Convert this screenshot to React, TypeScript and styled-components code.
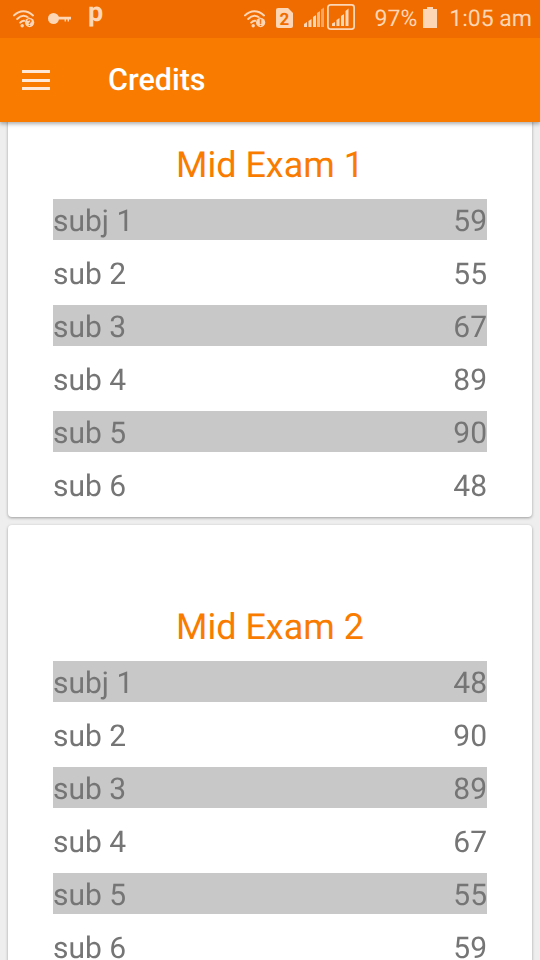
import React from 'react';
import styled, { createGlobalStyle } from 'styled-components';

const GlobalStyle = createGlobalStyle`
  html, body {
    margin: 0;
    padding: 0;
    background: #eeeeee;
  }
  body {
    font-family: Roboto, "Liberation Sans", sans-serif;
    text-rendering: geometricPrecision;
  }
`;

const Screen = styled.div`
  width: 540px;
  height: 960px;
  display: flex;
  flex-direction: column;
  overflow: hidden;
  background: #eeeeee;
`;

const StatusBar = styled.div`
  height: 38px;
  flex: none;
  display: flex;
  align-items: center;
  background: #f06c00;
  color: #fdd6b5;
  position: relative;
  z-index: 3;
`;

const StatusLeft = styled.div`
  display: flex;
  align-items: center;
  padding-left: 13px;
  flex: 1;
`;

const StatusRight = styled.div`
  display: flex;
  align-items: center;
  padding-right: 8px;
`;

const StatusText = styled.span<{ $gap: number }>`
  font-size: 23px;
  line-height: 38px;
  margin-left: ${p => p.$gap}px;
  color: #fdd6b5;
`;

const NotifyLetter = styled.span`
  font-size: 27px;
  font-weight: 700;
  line-height: 24px;
  margin: 0 0 14px 17px;
  color: #fdd6b5;
`;

const Glyph = styled.svg<{ $gap?: number; $lift?: number }>`
  display: block;
  flex: none;
  margin-left: ${p => p.$gap ?? 0}px;
  margin-bottom: ${p => p.$lift ?? 0}px;
`;

const Toolbar = styled.header`
  height: 84px;
  flex: none;
  display: flex;
  align-items: center;
  background: #f97c00;
  box-shadow: 0 2px 4px rgba(0, 0, 0, 0.32);
  position: relative;
  z-index: 2;
`;

const MenuButton = styled.div`
  width: 28px;
  height: 20px;
  margin-left: 22px;
  display: flex;
  flex-direction: column;
  justify-content: space-between;
`;

const MenuLine = styled.span`
  display: block;
  height: 3px;
  background: #ffe9d6;
`;

const Title = styled.h1`
  margin: 1px 0 0 58px;
  font-size: 30.5px;
  font-weight: 500;
  color: #ffffff;
`;

const Content = styled.main`
  flex: 1;
  overflow: hidden;
  padding: 0 8px;
  display: flex;
  flex-direction: column;
  gap: 8px;
`;

const Card = styled.section<{ $offset: number }>`
  flex: none;
  margin-top: ${p => p.$offset}px;
  padding: 81px 45px 12px;
  background: #ffffff;
  border-radius: 4px;
  box-shadow: 0 1px 3px rgba(0, 0, 0, 0.35);
`;

const ExamTitle = styled.h2`
  margin: 0 0 14px;
  padding-top: 1px;
  height: 40px;
  font-size: 36px;
  line-height: 41px;
  font-weight: 400;
  text-align: center;
  color: #f97c00;
`;

const Rows = styled.div`
  display: flex;
  flex-direction: column;
  gap: 12px;
  will-change: transform;
`;

const Row = styled.div<{ $shaded: boolean }>`
  height: 41px;
  padding-top: 4px;
  box-sizing: border-box;
  display: flex;
  justify-content: space-between;
  align-items: center;
  font-size: 30px;
  color: #757575;
  background: ${p => (p.$shaded ? '#c8c8c8' : 'transparent')};
`;

const exams = [
  {
    name: 'Mid Exam 1',
    offset: -59,
    marks: [['subj 1', 59], ['sub 2', 55], ['sub 3', 67], ['sub 4', 89], ['sub 5', 90], ['sub 6', 48]],
  },
  {
    name: 'Mid Exam 2',
    offset: 0,
    marks: [['subj 1', 48], ['sub 2', 90], ['sub 3', 89], ['sub 4', 67], ['sub 5', 55], ['sub 6', 59]],
  },
];

const Wifi = ({ badge }: { badge: string }) => (
  <Glyph width="22" height="18" viewBox="0 0 22 18" fill="none">
    <g stroke="#fdd6b5" strokeWidth="2" strokeLinecap="round">
      <path d="M1 5.4 C6.5 -0.2 14 -0.2 20 5.4" />
      <path d="M4.2 9 C8 5 12.5 5 16.3 8.6" />
      <path d="M7.2 12.6 C9 10.8 11 10.6 12 11" />
    </g>
    <circle cx="9.2" cy="15.8" r="1.7" fill="#fdd6b5" />
    <circle cx="16.6" cy="12.6" r="5" fill="#f06c00" />
    <circle cx="16.6" cy="12.6" r="4.6" fill="#fdd6b5" />
    <text x="16.6" y="15.9" fontSize="9.5" fontWeight="700" textAnchor="middle" fill="#f06c00" fontFamily="Roboto">{badge}</text>
  </Glyph>
);

const Key = () => (
  <Glyph $gap={13} $lift={2} width="23" height="11" viewBox="0 0 23 11" fill="#fdd6b5">
    <circle cx="5.5" cy="5.5" r="5.5" />
    <path d="M9 3.8 H23 V6.6 H21 V8.4 H19.6 V6.6 H18 V8.4 H16.6 V6.6 H9 Z" />
  </Glyph>
);

const Bars = () => (
  <Glyph $gap={11} $lift={4} width="20" height="20" viewBox="0 0 20 20" fill="#fdd6b5">
    <polygon points="0,20 0,17 3,15 3,20" />
    <polygon points="4.5,20 4.5,14 7.5,12 7.5,20" />
    <polygon points="9,20 9,10 12,8 12,20" />
    <polygon points="13,20 13,6 16,4 16,20" opacity="0.75" />
    <polygon points="17,20 17,2.5 20,0.5 20,20" opacity="0.55" />
  </Glyph>
);

const BoxedBars = () => (
  <Glyph $gap={3} $lift={4} width="28" height="26" viewBox="0 0 28 26" fill="#fdd6b5">
    <rect x="0.9" y="0.9" width="26.2" height="24.2" rx="2.5" fill="none" stroke="#fdd6b5" strokeWidth="1.8" />
    <polygon points="5,22 5,19.5 8,18 8,22" />
    <polygon points="9.5,22 9.5,16 12.5,14 12.5,22" />
    <polygon points="14,22 14,12 17,10 17,22" />
    <polygon points="18.5,22 18.5,7 21.5,4.5 21.5,22" />
  </Glyph>
);

const Sim = () => (
  <Glyph $gap={10} $lift={3} width="17" height="20" viewBox="0 0 17 20">
    <path d="M2 0 H12 L17 5 V18 a2 2 0 0 1 -2 2 H2 a2 2 0 0 1 -2 -2 V2 a2 2 0 0 1 2 -2 Z" fill="#fdd6b5" />
    <text x="8.5" y="16.5" fontSize="17" fontWeight="700" textAnchor="middle" fill="#f06c00" fontFamily="Roboto">2</text>
  </Glyph>
);

const Battery = () => (
  <Glyph $gap={6} $lift={3} width="14" height="21" viewBox="0 0 14 21" fill="#fdd6b5">
    <path d="M4 0 H10 V2 H14 V21 H0 V2 H4 Z" />
  </Glyph>
);

export default function App() {
  return (
    <Screen>
      <GlobalStyle />
      <StatusBar>
        <StatusLeft>
          <Wifi badge="?" />
          <Key />
          <NotifyLetter>p</NotifyLetter>
        </StatusLeft>
        <StatusRight>
          <Wifi badge="!" />
          <Sim />
          <Bars />
          <BoxedBars />
          <StatusText $gap={20}>97%</StatusText>
          <Battery />
          <StatusText $gap={12}>1:05 am</StatusText>
        </StatusRight>
      </StatusBar>
      <Toolbar>
        <MenuButton>
          <MenuLine />
          <MenuLine />
          <MenuLine />
        </MenuButton>
        <Title>Credits</Title>
      </Toolbar>
      <Content>
        {exams.map(exam => (
          <Card key={exam.name} $offset={exam.offset}>
            <ExamTitle>{exam.name}</ExamTitle>
            <Rows>
              {exam.marks.map(([label, mark], i) => (
                <Row key={i} $shaded={i % 2 === 0}>
                  <span>{label}</span>
                  <span>{mark}</span>
                </Row>
              ))}
            </Rows>
          </Card>
        ))}
      </Content>
    </Screen>
  );
}
